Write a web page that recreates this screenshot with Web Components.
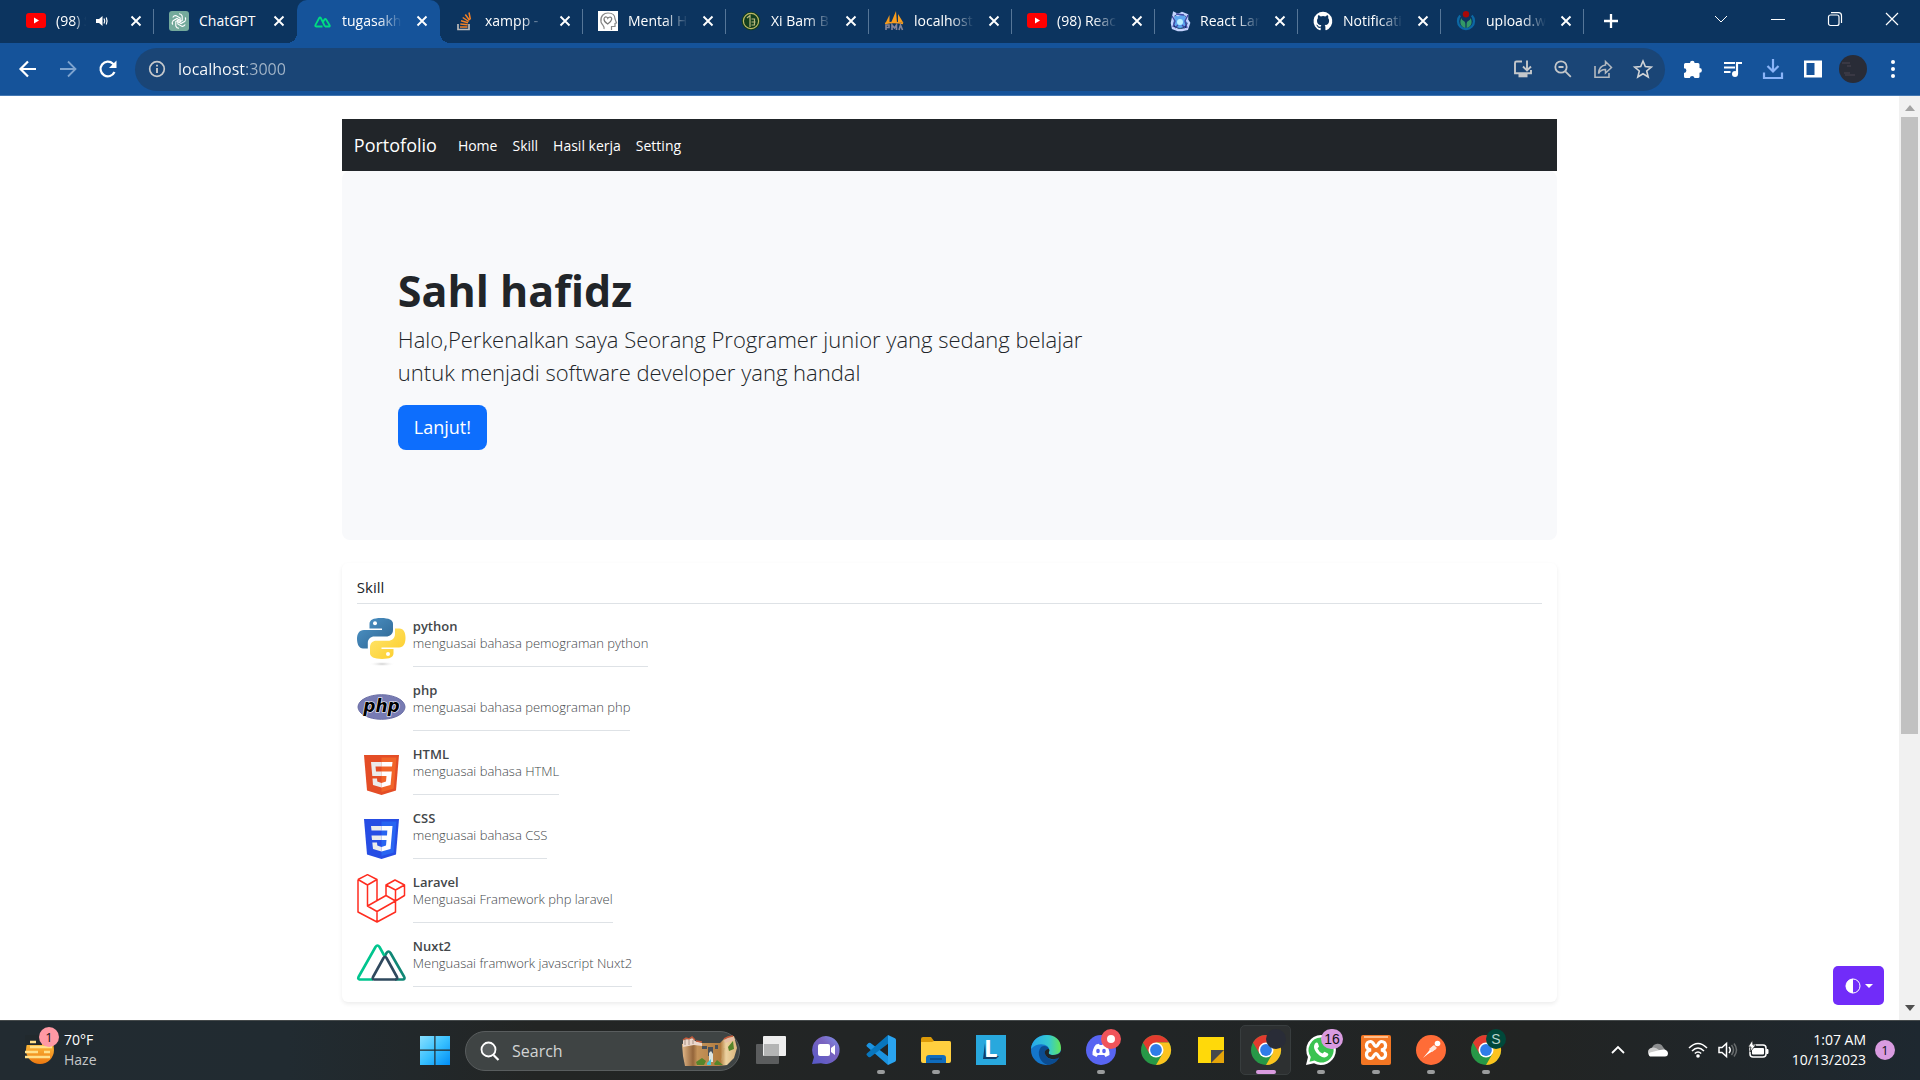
<!DOCTYPE html>
<html lang="id">
<head>
<meta charset="utf-8">
<title>tugasakhir</title>
<style>
html,body{margin:0;height:100%}
body{font-family:"Open Sans","Noto Sans",sans-serif;font-size:14px;color:#212529;background:#fff;overflow:hidden}
desktop-shell{height:100%}
</style>
</head>
<body>
<desktop-shell></desktop-shell>
<script>
const chromeLogo='<circle cx="15" cy="15" r="15" fill="#279847"/><path d="M2 7.500A15 15 0 0 1 28 7.500H15L8.500 18.750Z" fill="#e33b2e"/><path d="M28 7.500A15 15 0 0 1 15 30L21.500 18.750L15 7.500Z" fill="#fcc31e"/><circle cx="15" cy="15" r="7.500" fill="#fff"/><circle cx="15" cy="15" r="5.900" fill="#2f7de9"/>';
const youtube='<rect y="2" width="20" height="15" rx="3" fill="#f00"/><path d="M8 6.500v6l5-3z" fill="#fff"/>';
const petal='<path d="M10 2.800a3.400 3.400 0 0 1 3.200 2.200v4.500l-3.700 2.100"/>';
const shield=(a,b,glyph)=>`<path d="M7 9H42L39 44.500L24.500 49L10 44.500Z" fill="${a}"/><path d="M24.500 11.500H39.500L36.700 42.500L24.500 46Z" fill="${b}"/>${glyph}`;
const icons={
 youtube:[20,20,youtube],
 openai:[20,20,`<rect width="20" height="20" rx="3" fill="#74aa9c"/><g fill="none" stroke="#fff" stroke-width="1.100">${[0,60,120,180,240,300].map(a=>`<g transform="rotate(${a} 10 10)">${petal}</g>`).join('')}</g>`],
 nuxt3:[20,20,'<path d="M10.500 15.500H4.200Q2.800 15.300 3.400 14.100L7.200 7Q8 5.800 8.800 7L13 15.500M11 11L12.600 8.300Q13.300 7.300 14 8.300L17.600 14.200Q18.200 15.300 17.100 15.500H13" fill="none" stroke="#00dc82" stroke-width="1.800"/>'],
 stack:[20,20,'<path d="M3 13v5.500h11V13" fill="none" stroke="#bcbbbb" stroke-width="1.700"/><path d="M5 16h7.500M5.300 13l7.400.8M6 9.700l7 2M7.700 6.500l6 4M10.300 3.500l4.200 5.800M14 1.500l1.400 7" stroke="#f48024" stroke-width="1.500"/>'],
 mental:[20,20,'<rect width="20" height="20" fill="#fff"/><path d="M6 18c1-3-2-4-3-7C2 5 6 2 10 2c5 0 7 3 7 6l1.500 4-1.500.5v3h-3.500V19" fill="none" stroke="#888" stroke-width="1.200"/><path d="M9.700 13C4 9.500 6 5.500 8.300 6q1 .2 1.500 1.300Q10.500 6 12 6c2.500.2 2.700 4-2.300 7Z" fill="none" stroke="#777" stroke-width="1.200"/>'],
 bam:[20,20,'<circle cx="10" cy="10" r="9.300" fill="#123f1c"/><circle cx="10" cy="10" r="7.600" fill="none" stroke="#bfb867" stroke-width="1.200"/><path d="M6 7l3-2.500V16M10.500 8h3v6h-3M10.500 11h4" fill="none" stroke="#b9b87c" stroke-width="1.200"/>'],
 pma:[20,20,'<path d="M1.500 12L5.500 4v8zM7 12L12 0l1 12zM14 11V3l5.500 9z" fill="#f89c1c"/><path d="M1 12.500q9-2 18 0" stroke="#f89c1c" stroke-width="1.300" fill="none"/><path d="M2 19v-5h3v2.500H2M8 19v-5l2.500 3 2-3v5M15 19l1.500-5 2 5" fill="none" stroke="#85859a" stroke-width="1.600"/>'],
 react:[20,20,'<circle cx="10" cy="10" r="7" fill="#5da6ef"/><path d="M4 2l4 2 4-2 5 2v5l2 3-2 6-5 1-4 0-5-2-1-5 1-5z" fill="none" stroke="#c5d4ff" stroke-width="2.500"/><path d="M2 5l3 5-2 6M18 4l-3 6 2 7M6 3l8 1M5 17l3-3M15 17l-3-3" stroke="#4549a5" fill="none" stroke-width="1.400"/><circle cx="10" cy="11" r="3" fill="#b9efff"/>'],
 github:[20,20,'<path d="M10 .8a9.500 9.500 0 0 0-3 18.500c.5.1.7-.2.7-.5v-2c-2.700.6-3.200-1.100-3.200-1.100-.4-1.100-1.100-1.400-1.100-1.400-.9-.6.1-.6.1-.6 1 .1 1.500 1 1.500 1 .8 1.500 2.200 1 2.800.8.100-.6.3-1 .6-1.300-2.200-.2-4.400-1-4.400-4.700 0-1 .4-1.900 1-2.600-.1-.2-.4-1.200.1-2.500 0 0 .8-.3 2.600 1a9 9 0 0 1 4.700 0c1.800-1.300 2.600-1 2.600-1 .5 1.300.2 2.300.1 2.500.6.7 1 1.600 1 2.600 0 3.700-2.200 4.500-4.400 4.700.4.3.7.9.7 1.800v2.700c0 .3.200.6.7.5A9.500 9.500 0 0 0 10 .8Z" fill="#fff"/>'],
 wiki:[20,20,'<path d="M4.200 4.500a8 8 0 1 0 11.600 0" fill="none" stroke="#0c68a4" stroke-width="2.300"/><path d="M9.400 17C3 15.500 4 9 5.500 7c0 3 3.900 2 3.900 6zM10.600 17C17 15.500 16 9 14.500 7c0 3-3.900 2-3.900 6z" fill="#339966"/><circle cx="10" cy="3.300" r="3.200" fill="#a90808"/>'],
 audio:[12,12,'<path d="M0 4h3l3.500-3v10L3 8H0z" fill="#fff"/><path d="M8 3.500q1.500 2.500 0 5M10.300 2.500q1.500 3.500 0 7" stroke="#fff" stroke-width="1.200" fill="none"/>'],
 close:[10,10,'<path d="M.5 .5l9 9M9.500 .5L.5 9.500" stroke="#fff" stroke-width="1.900"/>'],
 plus:[16,16,'<path d="M8 1v14M1 8h14" stroke="#fff" stroke-width="2.300"/>'],
 wchev:[14,14,'<path d="M1 4l6 6 6-6" stroke="#fff" fill="none"/>'],
 wmin:[14,14,'<path d="M0 7.500h14" stroke="#fff"/>'],
 wmax:[14,14,'<rect x=".5" y="3" width="10.500" height="10.500" rx="2" fill="none" stroke="#fff" stroke-width="1.200"/><path d="M3 .7h7.500a3 3 0 0 1 3 3V11" fill="none" stroke="#fff" stroke-width="1.200"/>'],
 wclose:[14,14,'<path d="M1 1l12 12M13 1L1 13" stroke="#fff" stroke-width="1.200"/>'],
 back:[20,20,'<path d="M18 10H3M10 2.500L2.500 10l7.500 7.500" stroke="#fff" fill="none" stroke-width="2.200"/>'],
 fwd:[20,20,'<path d="M2 10h15M10 2.500l7.500 7.500-7.500 7.500" stroke="#7ea4cf" fill="none" stroke-width="1.800"/>'],
 reload:[20,20,'<path d="M16.500 13A7.300 7.300 0 1 1 15 4.800L17 7" stroke="#fff" fill="none" stroke-width="2.200"/><path d="M18.500 1.500V9H11z" fill="#fff"/>'],
 info:[18,18,'<circle cx="9" cy="9" r="7.300" fill="none" stroke="#c6c9cc" stroke-width="1.700"/><path d="M9 8v5M9 4.800v1.800" stroke="#c6c9cc" stroke-width="1.900"/>'],
 install:[20,20,'<path d="M9 2.500H3.500Q2 2.500 2 4v10.200h16V11" fill="none" stroke="#c4c7ca" stroke-width="1.900"/><path d="M5.500 15h9v3.300h-9z" fill="#c4c7ca"/><path d="M14 1.500V11M10 7.500l4 4 4-4" fill="none" stroke="#c4c7ca" stroke-width="1.900"/>'],
 zoomout:[20,20,'<circle cx="8" cy="8" r="5.700" fill="none" stroke="#c4c7ca" stroke-width="1.800"/><path d="M12.300 12.300l5.500 5.500M5.500 8h5" stroke="#c4c7ca" stroke-width="1.800"/>'],
 share:[20,20,'<path d="M2 7v11.200h14V14" fill="none" stroke="#b3b9c0" stroke-width="1.600"/><path d="M5.500 14.500Q6 7 12.500 6V2.500L18.500 8.500l-6 5.500v-3.500Q8 10.300 5.500 14.500Z" fill="none" stroke="#b3b9c0" stroke-width="1.500"/>'],
 star:[20,20,'<path d="M10 2l2.300 5.600 6 .5-4.600 3.900 1.500 6L10 14.800 4.800 18l1.500-6L1.700 8.100l6-.5z" fill="none" stroke="#d0d3d6" stroke-width="1.600"/>'],
 ext:[20,20,'<path d="M7 4a2.300 2.300 0 0 1 4.600 0H15a1.500 1.500 0 0 1 1.500 1.500V9a2.400 2.400 0 0 1 0 4.800v3.700A1.500 1.500 0 0 1 15 19h-3.500a2.400 2.400 0 0 0-4.700 0H2.500A1.500 1.500 0 0 1 1 17.500V14a2.400 2.400 0 0 0 0-4.800V5.500A1.500 1.500 0 0 1 2.500 4z" fill="#fff"/>'],
 music:[20,20,'<path d="M1 4h11M1 8.500h11M1 13h6.500" stroke="#fff" stroke-width="2"/><circle cx="12" cy="15" r="3" fill="#fff"/><path d="M14 15V4h5" stroke="#fff" fill="none" stroke-width="2.200"/>'],
 download:[22,22,'<path d="M11 1v12M5.500 8l5.500 5.500L16.500 8M2 14.500V20h18v-5.500" fill="none" stroke="#8ab4f8" stroke-width="2.200"/>'],
 side:[20,20,'<path d="M1 1.500h18v17H1z" fill="#fff"/><path d="M3.500 4h8v12h-8z" fill="#15539a"/>'],
 avatar:[28,28,'<circle cx="14" cy="14" r="14" fill="#292c37"/><path d="M3 8h8M8 11h4M5 18h6M6 20h10" stroke="#4a4453" stroke-width="1"/>'],
 dots:[20,20,'<g fill="#fff"><circle cx="10" cy="3" r="2"/><circle cx="10" cy="10" r="2"/><circle cx="10" cy="17" r="2"/></g>'],
 contrast:[16,16,'<circle cx="8" cy="8" r="7" fill="none" stroke="#fff" stroke-width="1"/><path d="M8 .8a7.200 7.200 0 0 0 0 14.400z" fill="#fff"/>'],
 caret:[8,4,'<path d="M0 0h8L4 4z" fill="#fff"/>'],
 sup:[10,6,'<path d="M0 6h10L5 0z" fill="#a3a3a3"/>'],
 sdown:[10,6,'<path d="M0 0h10L5 6z" fill="#505050"/>'],
 python:[49,49,'<defs><linearGradient id="a" x2="1" y2="1"><stop stop-color="#5097ca"/><stop offset="1" stop-color="#2b628f"/></linearGradient><linearGradient id="b" x2="1" y2="1"><stop stop-color="#ffe873"/><stop offset="1" stop-color="#fdcb25"/></linearGradient><radialGradient id="c"><stop stop-color="#ccc"/><stop offset="1" stop-color="#fff" stop-opacity="0"/></radialGradient></defs><ellipse cx="25" cy="46" rx="13" ry="2.500" fill="url(#c)"/><path d="M24 0c-8 0-11.500 2-11.500 6v4.500H25V12H7C2 12 0 16 0 21s2 9.500 6 9.500h4.800V25c0-4 3-6.500 6.500-6.500H29c4 0 7-2.500 7-6.500V6c0-4-4-6-12-6Z" fill="url(#a)"/><circle cx="18" cy="5.300" r="2" fill="#fff"/><path d="M38 10.500V16c0 4-3 6.800-7 6.800H19.500c-4 0-6.500 2.700-6.500 6.500v6c0 3.500 4 5.700 12 5.700s11.500-2 11.500-5.700V31H24.500v-1.500H42c4.500 0 6.500-4 6.500-9.500s-2-9.500-6-9.500z" fill="url(#b)"/><circle cx="31" cy="36" r="2" fill="#fff"/>'],
 php:[49,49,'<ellipse cx="24.500" cy="25" rx="23.500" ry="12.300" fill="#777bb3" stroke="#6a6ea5"/><text x="24.500" y="30" text-anchor="middle" font-family="DejaVu Sans,sans-serif" font-size="17" font-weight="bold" font-style="italic" fill="#000" stroke="#fff" stroke-width="1.200" paint-order="stroke">php</text>'],
 html:[49,49,shield('#e44d26','#f16529','<path d="M14 16H24.500V20.500H18.500L19 25.500H24.500V30H15.300ZM15.500 32.500H20L20.300 35.500L24.500 37V41.500L16 39Z" fill="#ebebeb"/><path d="M24.500 16H35.500L35 20.500H24.500ZM24.500 25.500H34.800L33.500 39L24.500 41.500V37L29 35.500L29.500 30H24.500Z" fill="#fff"/>')],
 css:[49,49,shield('#264de4','#2965f1','<path d="M14 16H24.500V20.500H14.500ZM14.500 25.500H24.500V30H15ZM15.300 32.500H20L20.300 35.500L24.500 37V41.500L16 39Z" fill="#ebebeb"/><path d="M24.500 16H35.500L33.500 39L24.500 41.500V37L29 35.500L29.500 30H24.500V25.500H30L30.300 20.500H24.500Z" fill="#fff"/>')],
 laravel:[49,49,'<path d="M1 5.500L10.500 .7L20 5.500V26.500M1 5.500V38L20 48L38.500 38V27M1 5.500L10.500 11L20 5.500M10.500 11V32L20 37.500L38.500 27M20 37.500V48M10.500 32L29 21.500L38.500 27L47.500 21.500V11L38 6L29 11V21.500M29 11L38.500 16L47.500 11M38.500 16V27" stroke="#ff2d20" stroke-width="1.500" stroke-linejoin="round" fill="none"/>'],
 nuxt:[49,49,'<g fill="none" stroke-width="2.600" stroke-linejoin="round"><path d="M38 41.500H46Q48.500 41 47 38.500L33.500 15Q31.500 12 29.500 15L27.500 18.500" stroke="#108775"/><path d="M16 41.500H2.500Q.5 41 1.500 39L18.500 9Q20.500 6 22.500 9L27.500 18" stroke="#00c58e"/><path d="M17 41.500H38.500Q41 41 40 39L29.500 20Q28 17.500 26.500 20L16 39Q15 41.500 17 41.500Z" stroke="#2f495e"/></g>'],
 weather:[30,30,'<defs><linearGradient id="w" x2="0" y2="1"><stop stop-color="#ffd24a"/><stop offset="1" stop-color="#ee7910"/></linearGradient></defs><circle cx="15" cy="15" r="14" fill="url(#w)"/><path d="M0 0h17v10H0z" fill="#21292d"/><path d="M5 7h6M5 12h22M0 17h13M19 17h6M0 22h25" stroke="#ffe08a" stroke-width="2.600"/>'],
 win:[30,30,'<defs><linearGradient id="n" x2="1" y2="1"><stop stop-color="#89e0ff"/><stop offset=".5" stop-color="#39c1ff"/><stop offset="1" stop-color="#008df5"/></linearGradient></defs><path d="M0 1h14.300v13.500H0zM15.500 1H30v13.500H15.500zM0 15.700h14.300V30H0zM15.500 15.700H30V30H15.500z" fill="url(#n)"/>'],
 search:[20,20,'<circle cx="8.500" cy="8.500" r="7" fill="#5a5f60" stroke="#fff" stroke-width="1.800"/><path d="M13.500 14l5 5" stroke="#fff" stroke-width="2.200"/>'],
 castle:[56,30,'<defs><linearGradient id="k" x2="1"><stop stop-color="#e3b98a"/><stop offset=".2" stop-color="#94653a"/><stop offset=".28" stop-color="#c4935a"/><stop offset=".7" stop-color="#b27c3f"/><stop offset=".8" stop-color="#ecd2a0"/><stop offset="1" stop-color="#dcb67e"/></linearGradient></defs><path d="M0 8l14-3 6 2h18l4-4 10-3 3 12-3 10-7 7-8 1H3L1 20Z" fill="url(#k)"/><path d="M1 4l10-2 2 3 7 2v3l-8-1-11 2Z" fill="#ead7cb"/><path d="M42 3l9-3 2 4-10 3z" fill="#e6bfa4"/><path d="M1 4l3-2 3 1 3-2 3 3M42 3l4-2 5-1M14 5l6 1" stroke="#c25b3c" stroke-width="1.500" fill="none"/><path d="M3 4v5M7 4v5M11 4v4" stroke="#9a8177" stroke-width=".8"/><path d="M20 10h5v3h-5zM33 9h3v4h-3zM26 11h5v9h-5z" fill="#495059"/><path d="M27 17l2-2 2 3v8h-4z" fill="#dce4e0"/><path d="M25 27l4-4v6h-4z" fill="#4cc9d6"/><path d="M14 26l6-4 4 3-2 4h-7zM32 28l3-4 6 5h-8zM46 11l5-6 1 8-5 2z" fill="#56852a"/><path d="M42 12l-2 12" stroke="#c9a56d" stroke-width="1"/>'],
 task:[30,30,'<rect y="9" width="23" height="20" rx="1" fill="#5b5d5e"/><rect x="7" y="1" width="23" height="20" rx="1" fill="#eee"/><path d="M8 9h15v12H8z" fill="#b4b5b5"/>'],
 meet:[30,30,'<defs><linearGradient id="m" x1="1" x2="0" y2="1"><stop stop-color="#7f95ee"/><stop offset=".4" stop-color="#7a63bf"/><stop offset="1" stop-color="#5558c8"/></linearGradient></defs><path d="M15 1a14 14 0 1 1-5 27.200L1 29l2-7A14 14 0 0 1 15 1Z" fill="url(#m)"/><rect x="7" y="9" width="12" height="12" rx="2" fill="#fff"/><path d="M20 13l4-3v10l-4-3z" fill="#fff"/>'],
 vscode:[30,30,'<path d="M22 30L.8 11.500Q0 10.500 .8 9.700L2.500 8Q3.500 7.300 4.500 8L23 22Z" fill="#1b93e0"/><path d="M22 0L.8 18.500Q0 19.500 .8 20.300L2.500 22Q3.500 22.700 4.500 22L23 8Z" fill="#0876bd"/><path d="M22 0l7 3.300q1 .5 1 1.700v20q0 1.200-1 1.700L22 30Z" fill="#2aa4f0"/>'],
 folder:[30,30,'<path d="M0 4q0-2 2-2h8l3 4h15q2 0 2 2v12H0z" fill="#dc9a08"/><path d="M0 7h11l2-1h15q2 0 2 2v18q0 2-2 2H2q-2 0-2-2z" fill="#ffcf3f"/><path d="M5 28v-5q0-3 3-3h14q3 0 3 3v5z" fill="#0f6cbd"/><path d="M9 24h12" stroke="#0a4a86" stroke-width="1.500"/>'],
 lapp:[30,30,'<path d="M0 0h30v30H0z" fill="#28a8dd"/><path d="M9 8l-2 16h13l3-3H10z" fill="#113f6b"/><text x="8" y="22" font-family="Open Sans,sans-serif" font-size="24" font-weight="bold" fill="#fff">L</text>'],
 edge:[30,30,'<defs><linearGradient id="e" x2="1"><stop stop-color="#26a8ee"/><stop offset=".6" stop-color="#35c9cf"/><stop offset="1" stop-color="#64e657"/></linearGradient></defs><circle cx="15" cy="15" r="15" fill="#1476cb"/><path d="M0 14C1-4 30-5 30 13c0 5-4 7-8 7-3 0-5-1-4-3C20 9 7 6 0 14Z" fill="url(#e)"/><path d="M10 12c-5 6-1 16 7 18 6-.5 10-4 11-8-5 4-12 3-14-3-1-3 1-5 4-5-1-3-5-4-8-2Z" fill="#0b4c91"/><path d="M14 19c-1-3 1-5 4-5q1 1 0 3c-1 2 1 3 4 3 4 0 7-1.500 8-4l1 4-3 2.500C23 25.500 16 24.500 14 19Z" fill="#222526"/>'],
 discord:[30,30,'<circle cx="15" cy="15" r="15" fill="#5865f2"/><path d="M10 9.500l3-.8.700 1.300h2.600l.700-1.300L20 9.500c2.500 3 3.800 6.500 3.500 10.500l-4 2-1.300-2h-6.400l-1.300 2-4-2C6.200 16 7.500 12.500 10 9.500Z" fill="#fff"/><ellipse cx="12" cy="16" rx="1.800" ry="2.200" fill="#5865f2"/><ellipse cx="18" cy="16" rx="1.800" ry="2.200" fill="#5865f2"/>'],
 chrome:[30,30,chromeLogo],
 notes:[30,30,'<path d="M2 2h26v26H2z" fill="#ffd90a"/><path d="M15 15h13v13H15z" fill="#e5a50a"/><path d="M15 15h13L15 28z" fill="#45484c"/>'],
 whatsapp:[30,30,'<path d="M15 0a15 15 0 1 1-7 28.300L0 30l2-8A15 15 0 0 1 15 0Z" fill="#fff"/><path d="M15 2.500A12.500 12.500 0 1 1 8.500 25.600L3.500 26.700 4.800 22A12.500 12.500 0 0 1 15 2.500Z" fill="#3ac351"/><path d="M9 8.500q2-2 3 0l1 3-1.500 2q1.500 3.500 5 5l2-1.700 3.500 1.700q1 1-.5 2.500-3 3-8-.5C9 17 6.500 12 9 8.500Z" fill="#fff"/>'],
 xampp:[30,30,'<rect width="30" height="30" rx="2" fill="#f37623"/><path d="M3 2h24" stroke="#ffbd8b" stroke-width="2"/><path d="M10 15C3.500 14 4.500 6.500 9.500 6.500C13 6.500 12.500 11 15 11.500C17.500 11 17 6.500 20.500 6.500C25.500 6.500 26.500 14 20 15C26.500 16 25.500 23.500 20.500 23.500C17 23.500 17.500 19 15 18.500C12.500 19 13 23.500 9.500 23.500C4.500 23.500 3.500 16 10 15Z" fill="none" stroke="#fff" stroke-width="3.200"/>'],
 postman:[30,30,'<circle cx="15" cy="15" r="15" fill="#ff6c37"/><path d="M7 23L17 11l3 3L12 19Z" fill="#fff"/><circle cx="21.500" cy="8.500" r="2.800" fill="#fff"/><path d="M13 14l5-4 3 3-5 4z" fill="#ffe4d9"/>'],
 up:[14,8,'<path d="M1 7l6-6 6 6" stroke="#fff" stroke-width="1.800" fill="none"/>'],
 cloud:[20,14,'<path d="M4 5a6 6 0 0 1 11-1l4 5H3z" fill="#8b8d8e"/><path d="M0 9q0-4 5-4.500Q8 4 11 7l5 6H4q-4 0-4-4Z" fill="#ccc"/><path d="M2 13.500Q-.5 11.500 2 9.500L12 7q7-2 8 3 0 3.500-3 3.500z" fill="#fff"/>'],
 wifi:[20,16,'<g fill="none" stroke="#fff" stroke-width="1.500"><path d="M1 6q9-9 18 0M4 9q6-6 12 0M6.800 11.500q3.200-3 6.400 0"/></g><circle cx="10" cy="14" r="1.800" fill="#fff"/>'],
 vol:[20,16,'<path d="M1 5.500h3L8.500 1.500v13L4 10.500H1z" fill="none" stroke="#fff" stroke-width="1.500"/><path d="M11 5q2.500 3 0 6" stroke="#fff" fill="none" stroke-width="1.500"/><path d="M13.500 3q4 5 0 10M16 1.500q5 6.500 0 13" stroke="#686c6d" fill="none" stroke-width="1.500"/>'],
 batt:[22,18,'<rect x="2" y="4" width="16" height="12" rx="3" fill="none" stroke="#fff" stroke-width="1.500"/><rect x="4" y="7" width="12" height="6.500" rx="1" fill="#fff"/><path d="M18.500 8.500h1.500v4h-1.500z" fill="#fff" stroke="#fff"/><path d="M4.500-1L0 6h3l-1 5 6-7H5z" fill="#fff" stroke="#202425" stroke-width=".8"/>']
};

function define(name, html, setup){
  const t=document.createElement('template'); t.innerHTML=html;
  customElements.define(name, class extends HTMLElement{
    constructor(){super();this.attachShadow({mode:'open'}).append(t.content.cloneNode(true));}
    connectedCallback(){ if(setup) setup.call(this,this.shadowRoot); }
  });
}
function makeIcon(name){
  const i=document.createElement('ui-icon');
  i.setAttribute('name',name);
  return i;
}

define('ui-icon','<style>:host{display:inline-flex;flex:none}svg{display:block;overflow:visible}</style><span></span>',function(r){
  const [w,h,m]=icons[this.getAttribute('name')];
  r.querySelector('span').innerHTML=`<svg width="${w}" height="${h}" viewBox="0 0 ${w} ${h}" aria-hidden="true">${m}</svg>`;
});

define('browser-tab',`<style>
:host{display:flex;flex:0 0 143px;min-width:0;box-sizing:border-box;height:43px;align-items:center;padding:0 8px 2px 15px;gap:10px;position:relative;color:#fff;font-size:14px}
:host([line])::after{content:"";position:absolute;right:0;top:9px;width:1px;height:25px;background:#567698}
:host([active]){background:#15539a;border-radius:10px 10px 0 0}
:host([active])::before,:host([active])::after{content:"";position:absolute;bottom:0;width:10px;height:10px}
:host([active])::before{left:-10px;background:radial-gradient(circle at 0 0,transparent 10px,#15539a 10px)}
:host([active])::after{right:-10px;background:radial-gradient(circle at 100% 0,transparent 10px,#15539a 10px)}
.t{flex:1;min-width:0;overflow:hidden;white-space:pre;line-height:20px;-webkit-mask-image:linear-gradient(90deg,#000 60%,transparent);mask-image:linear-gradient(90deg,#000 60%,transparent)}
:host([whole]) .t{-webkit-mask-image:none;mask-image:none}
.a{margin-right:8px}
button{border:0;background:none;padding:5px;display:flex;flex:none}
</style><span class="t"><slot></slot></span><button aria-label="Tutup tab"><ui-icon name="close"></ui-icon></button>`,function(r){
  r.querySelector('.t').before(makeIcon(this.getAttribute('icon')));
  if(this.hasAttribute('audio')){
    const a=makeIcon('audio'); a.className='a';
    r.querySelector('button').before(a);
  }
});

define('browser-frame',`<style>
:host{display:block;flex:none;color:#fff}
.strip{background:#0c345f;height:43px;display:flex;padding-left:11px}
button{border:0;background:none;padding:0;display:flex;align-items:center;justify-content:center;flex:none}
.new{width:54px;height:42px}
.win{margin-left:auto;display:flex}
.win button{width:57px;height:37px}
.bar{background:#15539a;height:52px;border-bottom:1px solid #4377b2;display:flex;align-items:center;padding:0 7px 0 8px}
.bar>button{width:40px;height:40px}
.omni{flex:1;margin:0 8px 0 7px;height:43px;border-radius:22px;background:#1a4576;display:flex;align-items:center;padding:0 2px 0 13px}
.omni button{width:40px;height:40px}
label{display:flex;flex:1;align-items:center;gap:12px}
input{flex:1;border:0;outline:0;padding:0;height:30px;font:16px/30px "Open Sans",sans-serif;background:linear-gradient(90deg,#fff 67px,#a3b5c8 67px);-webkit-background-clip:text;background-clip:text;-webkit-text-fill-color:transparent}
</style>
<div class="strip">
<browser-tab icon="youtube" audio line>(98) S</browser-tab>
<browser-tab icon="openai" whole>ChatGPT</browser-tab>
<browser-tab icon="nuxt3" active>tugasakh</browser-tab>
<browser-tab icon="stack" line>xampp -</browser-tab>
<browser-tab icon="mental" line>Mental H</browser-tab>
<browser-tab icon="bam" line>Xi Bam B</browser-tab>
<browser-tab icon="pma" line>localhost</browser-tab>
<browser-tab icon="youtube" line>(98) Reac</browser-tab>
<browser-tab icon="react" line>React Lan</browser-tab>
<browser-tab icon="github" line>Notificati</browser-tab>
<browser-tab icon="wiki" line>upload.w</browser-tab>
<button class="new" aria-label="Tab baru"><ui-icon name="plus"></ui-icon></button>
<div class="win"><button aria-label="Cari tab"><ui-icon name="wchev"></ui-icon></button><button aria-label="Minimalkan"><ui-icon name="wmin"></ui-icon></button><button aria-label="Pulihkan"><ui-icon name="wmax"></ui-icon></button><button aria-label="Tutup"><ui-icon name="wclose"></ui-icon></button></div>
</div>
<div class="bar">
<button aria-label="Kembali"><ui-icon name="back"></ui-icon></button><button aria-label="Maju"><ui-icon name="fwd"></ui-icon></button><button aria-label="Muat ulang"><ui-icon name="reload"></ui-icon></button>
<div class="omni"><label><ui-icon name="info"></ui-icon><input aria-label="Alamat" value="localhost:3000" spellcheck="false"></label>
<button aria-label="Pasang"><ui-icon name="install"></ui-icon></button><button aria-label="Zoom"><ui-icon name="zoomout"></ui-icon></button><button aria-label="Bagikan"><ui-icon name="share"></ui-icon></button><button aria-label="Bookmark"><ui-icon name="star"></ui-icon></button></div>
<button aria-label="Ekstensi"><ui-icon name="ext"></ui-icon></button><button aria-label="Media"><ui-icon name="music"></ui-icon></button><button aria-label="Unduhan"><ui-icon name="download"></ui-icon></button><button aria-label="Panel samping"><ui-icon name="side"></ui-icon></button><button aria-label="Profil"><ui-icon name="avatar"></ui-icon></button><button aria-label="Menu"><ui-icon name="dots"></ui-icon></button>
</div>`);

define('site-nav',`<style>
:host{display:block;background:#212529}
nav{display:flex;align-items:center;gap:15px;height:52px;padding:0 12px;font-size:14px}
a,::slotted(a){color:#fff;text-decoration:none}
.brand{font-size:18px;margin-right:6px}
</style><nav><a class="brand" href="#">Portofolio</a><slot></slot></nav>`);

define('hero-banner',`<style>
:host{display:block;background:#f8f9fb;border-radius:8px;padding:92px 56px 90px}
h1{margin:0 0 4px;font-size:43px;line-height:56px;font-weight:700}
p{margin:0 0 16px;font-size:22px;line-height:33px;width:66%;font-weight:340}
button{height:45px;padding:0 16px;border:0;border-radius:8px;background:#0d6efd;color:#fff;font:18px/27px "Open Sans",sans-serif;display:block}
</style><h1><slot name="title"></slot></h1><p><slot></slot></p><button><slot name="action"></slot></button>`);

define('skill-item',`<style>
:host{display:flex;gap:7px;height:49px}
.b{border-bottom:1px solid #dee2e6;color:#43474a;font-size:13px;line-height:17px;font-weight:300}
b,span{display:block}
b{font-weight:600}
</style><slot name="icon"></slot><div class="b"><b><slot name="name"></slot></b><span><slot></slot></span></div>`);

define('skill-card',`<style>
:host{display:block;margin-top:23px;background:#fff;border-radius:6px;padding:14px 15px 15px;box-shadow:0 2px 4px rgba(0,0,0,.075)}
h2{margin:0 0 14px;padding-bottom:5px;border-bottom:1px solid #dee2e6;font-size:15px;line-height:21px;font-weight:500}
.l{display:flex;flex-direction:column;gap:15px}
</style><h2><slot name="title"></slot></h2><div class="l"><slot></slot></div>`);

define('page-view',`<style>
:host{display:flex;flex:1;min-height:0;position:relative;background:#fff}
.view{flex:1;overflow:hidden}
main{width:64%;margin:23px auto 0}
.theme{position:absolute;right:36px;bottom:15px;width:51px;height:39px;border:0;border-radius:5px;background:#712cf9;display:flex;align-items:center;justify-content:center;gap:4px;padding:0}
.sb{width:21px;background:#f1f1f1;display:flex;flex-direction:column;align-items:center;padding:9px 0;box-sizing:border-box;gap:6px}
.track{flex:1;width:17px}.thumb{height:70%;background:#c1c1c1}
</style><div class="view"><main>
<site-nav><a href="#home">Home</a><a href="#skill">Skill</a><a href="#kerja">Hasil kerja</a><a href="#setting">Setting</a></site-nav>
<hero-banner><span slot="title">Sahl hafidz</span>Halo,Perkenalkan saya Seorang Programer junior yang sedang belajar untuk menjadi software developer yang handal<span slot="action">Lanjut!</span></hero-banner>
<skill-card><span slot="title">Skill</span>
<skill-item><ui-icon slot="icon" name="python"></ui-icon><span slot="name">python</span>menguasai bahasa pemograman python</skill-item>
<skill-item><ui-icon slot="icon" name="php"></ui-icon><span slot="name">php</span>menguasai bahasa pemograman php</skill-item>
<skill-item><ui-icon slot="icon" name="html"></ui-icon><span slot="name">HTML</span>menguasai bahasa HTML</skill-item>
<skill-item><ui-icon slot="icon" name="css"></ui-icon><span slot="name">CSS</span>menguasai bahasa CSS</skill-item>
<skill-item><ui-icon slot="icon" name="laravel"></ui-icon><span slot="name">Laravel</span>Menguasai Framework php laravel</skill-item>
<skill-item><ui-icon slot="icon" name="nuxt"></ui-icon><span slot="name">Nuxt2</span>Menguasai framwork javascript Nuxt2</skill-item>
</skill-card></main></div>
<div class="sb"><ui-icon name="sup"></ui-icon><div class="track"><div class="thumb"></div></div><ui-icon name="sdown"></ui-icon></div>
<button class="theme" aria-label="Tema"><ui-icon name="contrast"></ui-icon><ui-icon name="caret"></ui-icon></button>`);

define('task-app',`<style>
:host{display:block;flex:none;width:55px;height:59px}
button{position:relative;width:51px;height:50px;margin:4px 2px;padding:0;border:1px solid transparent;border-radius:5px;background:none;display:flex;align-items:center;justify-content:center}
:host([active]) button{background:#2d3031;border-color:#383d3e}
:host([running]) button::after,:host([active]) button::after{content:"";position:absolute;bottom:0;width:8px;height:4px;border-radius:2px;background:#9a9c9d}
:host([active]) button::after{width:20px;background:#d99be0}
.badge{position:absolute;left:25px;top:3px}
::slotted(*){box-sizing:border-box;display:block;min-width:20px;height:20px;border-radius:10px;font-size:14px;line-height:20px;text-align:center}
</style><button><span class="badge"><slot></slot></span></button>`,function(r){
  const b=r.querySelector('button'), name=this.getAttribute('icon');
  b.prepend(makeIcon(name));
  b.setAttribute('aria-label',name);
});

define('task-bar',`<style>
:host{display:flex;flex:none;box-sizing:border-box;height:60px;border-top:1px solid #454a4b;background:linear-gradient(90deg,#222b31,#212b31 15%,#232524 28%,#212526 60%,#222423 80%,#1e2830);color:#fff;align-items:center;font-size:14px;line-height:20px}
.side{flex:1 1 0;display:flex;align-items:center;margin-bottom:2px}
.weather{gap:9px;padding-left:25px}
.wi{position:relative;display:flex}
.n{display:block;width:20px;height:20px;border-radius:50%;background:#ff99a4;color:#111;text-align:center;font-size:13px;line-height:20px}
.wi .n{position:absolute;left:14px;top:-8px}
.dim{color:#c5c7c8}
.apps{display:flex;align-items:center}
.find{display:flex;align-items:center;box-sizing:border-box;width:275px;height:40px;margin:0 3px;padding:0 1px 0 14px;gap:12px;border:1px solid #595d5e;border-radius:20px;background:#3f4444}
input{width:50px;flex:1;min-width:0;border:0;outline:0;padding:0;background:none;color:#fff;font:16px/24px "Open Sans",sans-serif}
input::placeholder{color:#d2d4d4;opacity:1}
.tray{justify-content:flex-end;padding-right:25px}
.tray>*{margin-left:10px}
.tray .c1{margin-right:13px}
.tray .c2{margin-right:10px}
.tray .clock{text-align:right;min-width:78px;margin-left:18px}
.tray .n{background:#d99be0;margin-left:9px}
.red{border:6px solid #f0545a;background:#fff}
.dark{background:#292c37}.pink{background:#d99be0;color:#111;width:22px}.green{background:#00483a;color:#b9d3cc}
</style>
<div class="side weather"><div class="wi"><ui-icon name="weather"></ui-icon><span class="n">1</span></div><div>70°F<div class="dim">Haze</div></div></div>
<div class="apps"><task-app icon="win"></task-app>
<label class="find"><ui-icon name="search"></ui-icon><input type="text" placeholder="Search" aria-label="Search"><ui-icon name="castle"></ui-icon></label>
<task-app icon="task"></task-app><task-app icon="meet"></task-app><task-app icon="vscode" running></task-app><task-app icon="folder" running></task-app><task-app icon="lapp"></task-app><task-app icon="edge"></task-app><task-app icon="discord" running><i class="red"></i></task-app><task-app icon="chrome"></task-app><task-app icon="notes"></task-app><task-app icon="chrome" active><i class="dark"></i></task-app><task-app icon="whatsapp" running><span class="pink">16</span></task-app><task-app icon="xampp" running></task-app><task-app icon="postman" running></task-app><task-app icon="chrome" running><span class="green">S</span></task-app></div>
<div class="side tray"><ui-icon class="c1" name="up"></ui-icon><ui-icon class="c2" name="cloud"></ui-icon><ui-icon name="wifi"></ui-icon><ui-icon name="vol"></ui-icon><ui-icon name="batt"></ui-icon><div class="clock">1:07 AM<br>10/13/2023</div><span class="n">1</span></div>`);

define('desktop-shell','<style>:host{display:flex;flex-direction:column}</style><browser-frame></browser-frame><page-view></page-view><task-bar></task-bar>');
</script>
</body>
</html>
